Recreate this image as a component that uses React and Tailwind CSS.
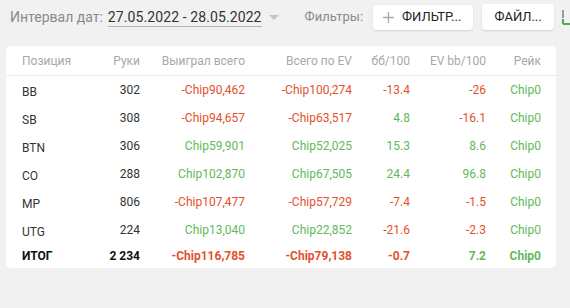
import React from "react";

const RED = "text-[#e4502b]";
const GREEN = "text-[#62b95a]";

const rows = [
  ["BB", "302", "-Chip90,462", "-Chip100,274", "-13.4", "-26", "Chip0"],
  ["SB", "308", "-Chip94,657", "-Chip63,517", "4.8", "-16.1", "Chip0"],
  ["BTN", "306", "Chip59,901", "Chip52,025", "15.3", "8.6", "Chip0"],
  ["CO", "288", "Chip102,870", "Chip67,505", "24.4", "96.8", "Chip0"],
  ["MP", "806", "-Chip107,477", "-Chip57,729", "-7.4", "-1.5", "Chip0"],
  ["UTG", "224", "Chip13,040", "Chip22,852", "-21.6", "-2.3", "Chip0"],
];

const cols = "grid grid-cols-[68px_50px_105px_107px_58px_76px_55px] px-4";

function color(v) {
  return v.startsWith("-") ? RED : GREEN;
}

export default function App() {
  return (
    <div
      className="w-[570px] h-[308px] bg-[#f1f1f1] overflow-hidden"
      style={{ fontFamily: "Roboto, 'Noto Sans', sans-serif" }}
    >
      <div className="flex items-center h-[34px] pl-[10px] whitespace-nowrap">
        <span className="text-[14px] text-[#8a8a8a]">Интервал дат:</span>
        <span className="ml-[5px] text-[14px] text-[#333] border-b border-[#b5b5b5] leading-[17px] mt-[2px] tracking-[0.1px]">
          27.05.2022 - 28.05.2022
        </span>
        <svg width="10" height="5" viewBox="0 0 10 5" className="ml-[7px] mt-[1px] shrink-0">
          <path d="M0 0 L10 0 L5 5 Z" fill="#c4c4c4" />
        </svg>
        <span className="ml-[26px] text-[13px] text-[#8a8a8a]">Фильтры:</span>
        <div className="ml-[10px] w-[100px] h-[25px] bg-white rounded-[4px] shadow-[0_1px_2px_rgba(0,0,0,0.12)] flex items-center pl-[10px] shrink-0">
          <svg width="11" height="11" viewBox="0 0 11 11">
            <path d="M5.5 0 V11 M0 5.5 H11" stroke="#aaa" strokeWidth="1.3" />
          </svg>
          <span className="ml-[8px] text-[13px] text-[#222]">ФИЛЬТР...</span>
        </div>
        <div className="ml-[9px] w-[72px] h-[26px] bg-white rounded-[4px] shadow-[0_1px_2px_rgba(0,0,0,0.12)] flex items-center justify-center shrink-0">
          <span className="text-[13px] text-[#222]">ФАЙЛ...</span>
        </div>
        <svg width="12" height="16" viewBox="0 0 12 16" className="ml-[8px] shrink-0 mt-[2px]">
          <rect x="0" y="0" width="2" height="8" fill="#9a9a9a" />
          <path d="M1 14 V9 M1 14 H12" stroke="#4caf50" strokeWidth="2" fill="none" />
        </svg>
      </div>

      <div className="mt-[12px] ml-[6px] w-[550px] bg-white rounded-[5px] text-[12px]">
        <div className={`${cols} h-[30px] items-center border-b border-[#ececec] text-[#a8a8a8]`}>
          <div>Позиция</div>
          <div className="text-right">Руки</div>
          <div className="text-right">Выиграл всего</div>
          <div className="text-right">Всего по EV</div>
          <div className="text-right">бб/100</div>
          <div className="text-right">EV bb/100</div>
          <div className="text-right">Рейк</div>
        </div>
        {rows.map((r) => (
          <div key={r[0]} className={`${cols} h-[28px] items-center`}>
            <div className="text-[#333] mt-[3px]">{r[0]}</div>
            <div className="text-right text-[#333]">{r[1]}</div>
            <div className={`text-right ${color(r[2])}`}>{r[2]}</div>
            <div className={`text-right ${color(r[3])}`}>{r[3]}</div>
            <div className={`text-right ${color(r[4])}`}>{r[4]}</div>
            <div className={`text-right ${color(r[5])}`}>{r[5]}</div>
            <div className={`text-right ${color(r[6])}`}>{r[6]}</div>
          </div>
        ))}
        <div className={`${cols} h-[24px] items-start pt-[3px] font-bold`}>
          <div className="text-[#111]">ИТОГ</div>
          <div className="text-right text-[#111]">2 234</div>
          <div className={`text-right ${RED}`}>-Chip116,785</div>
          <div className={`text-right ${RED}`}>-Chip79,138</div>
          <div className={`text-right ${RED}`}>-0.7</div>
          <div className={`text-right ${GREEN}`}>7.2</div>
          <div className={`text-right ${GREEN}`}>Chip0</div>
        </div>
      </div>
    </div>
  );
}
